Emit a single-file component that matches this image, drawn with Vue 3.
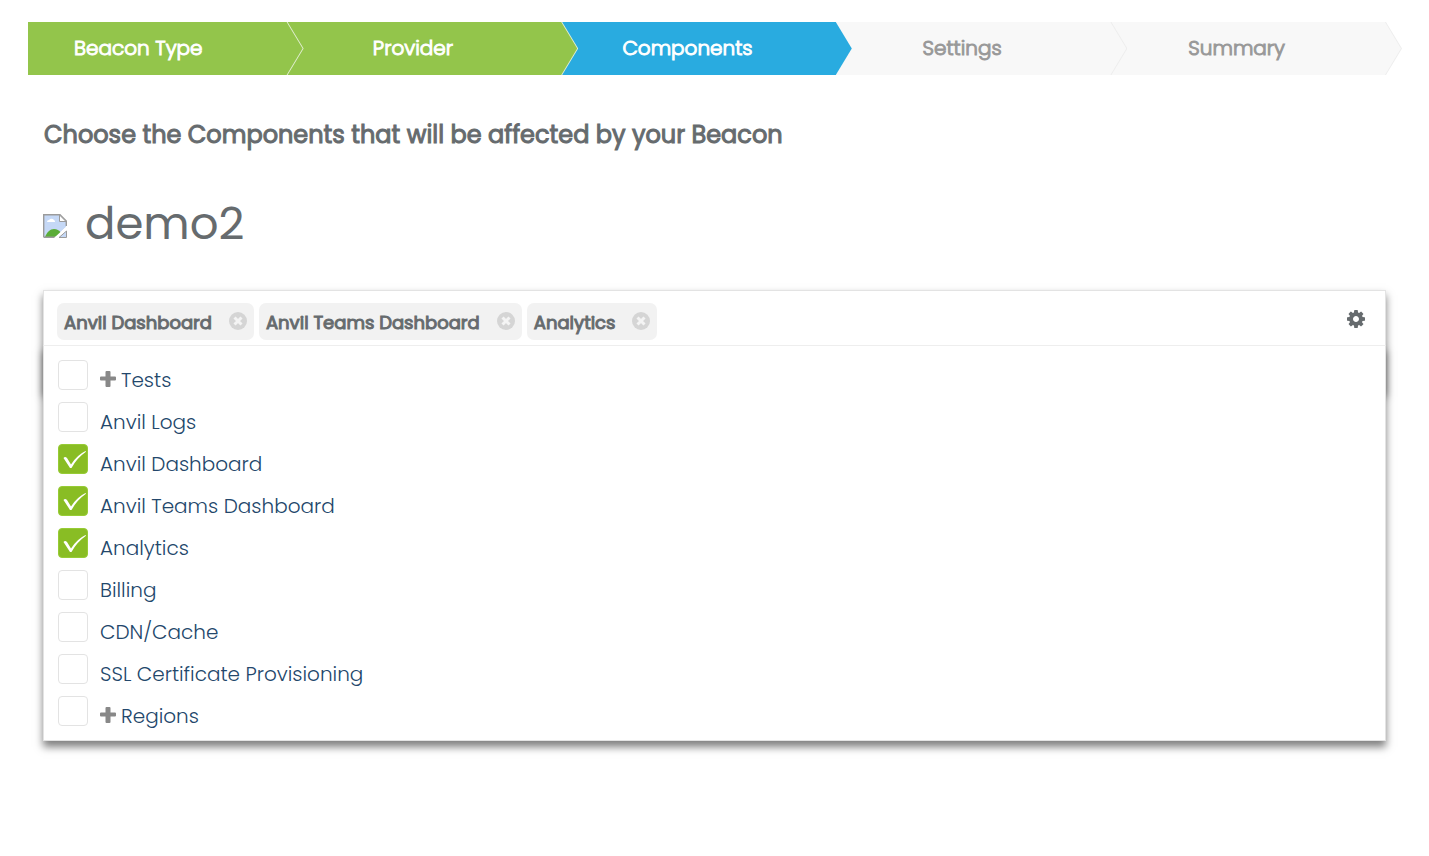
<template>
  <main class="wizard">
    <nav aria-label="Progress">
      <ol class="steps">
        <li
          v-for="(step, i) in steps"
          :key="step.name"
          class="step"
          :class="'step--' + step.state"
          :style="{ zIndex: steps.length - i }"
        >
          <a href="#" class="step-link" @click.prevent>{{ step.name }}</a>
        </li>
      </ol>
    </nav>

    <div class="content">
      <h4 class="heading">Choose the Components that will be affected by your Beacon</h4>

      <h1 class="provider">
        <svg class="provider-logo" viewBox="0 0 24 24" aria-hidden="true">
          <path d="M1 1h16l6 6v6L12 23H1z" fill="#c5d8f6" />
          <path d="M4 8a2 2 0 0 1 2-2 3 3 0 0 1 5 0 2 2 0 0 1 1 2z" fill="#fff" />
          <path d="M2 23c2-5 5-8 9-8 3 0 5 1 7 4l-6 4z" fill="#5bad38" />
          <path d="M.7 23.300V.7H17l6.300 6.300v5M.7 23.300H12" fill="none" stroke="#9b9b9b" stroke-width="1.400" />
          <path d="M16.500 1v6.500H23z" fill="#fff" stroke="#9b9b9b" />
          <path d="M24 12v4l-9 8h-4z" fill="#fff" />
          <path d="M16 23.500h7.500V17z" fill="#c5d8f6" stroke="#9b9b9b" />
        </svg>
        <span>demo2</span>
      </h1>

      <div class="select">
        <div class="select-bar">
          <ul class="chips">
            <li v-for="item in selected" :key="item.name" class="chip">
              <span>{{ item.name }}</span>
              <button
                type="button"
                class="chip-remove"
                :aria-label="'Remove ' + item.name"
                @click="item.checked = false"
              >
                <svg viewBox="0 0 18 18" aria-hidden="true">
                  <circle cx="9" cy="9" r="9" fill="#d5d5d5" />
                  <path d="M5.500 5.500l7 7M12.500 5.500l-7 7" stroke="#f4f4f4" stroke-width="3" />
                </svg>
              </button>
            </li>
          </ul>
          <button type="button" class="gear" aria-label="Options">
            <svg viewBox="0 0 1536 1536" aria-hidden="true">
              <path
                fill="#666b6e"
                d="M1024 768q0-106-75-181t-181-75-181 75-75 181 75 181 181 75 181-75 75-181zm512-109v222q0 12-8 23t-20 13l-185 28q-19 54-39 91 35 50 107 138 10 12 10 25t-9 23q-27 37-99 108t-94 71q-12 0-26-9l-138-108q-44 23-91 38-16 136-29 186-7 28-36 28H657q-14 0-24.500-8.500T621 1506l-28-184q-49-16-90-37l-141 107q-10 9-25 9-14 0-25-11-126-114-165-168-7-10-7-23 0-12 8-23 15-21 51-66.500t54-70.500q-27-50-41-99L29 913q-13-2-21-12.500T0 877V655q0-12 8-23t19-13l186-28q14-46 39-92-40-57-107-138-10-12-10-24 0-10 9-23 26-36 98.500-107.500T337 135q13 0 26 10l138 107q44-23 91-38 16-136 29-186 7-28 36-28h222q14 0 24.500 8.500T915 30l28 184q49 16 90 37l142-107q9-9 24-9 13 0 25 10 129 119 165 170 7 8 7 22 0 12-8 23-15 21-51 66.500t-54 70.500q26 50 41 98l183 28q13 2 21 12.500t8 23.500z"
              />
            </svg>
          </button>
        </div>

        <ul class="menu">
          <li v-for="item in items" :key="item.name">
            <label class="option">
              <span class="box">
                <input v-model="item.checked" type="checkbox" />
                <svg v-if="item.checked" viewBox="0 0 30 30" aria-hidden="true">
                  <path d="M5.500 14q1.500-2 3.500 0l4 6.500Q19 11 27.500 7l.5.800Q19 14 13.500 24h-1.500z" fill="#fff" />
                </svg>
              </span>
              <span class="option-text">
                <svg v-if="item.group" class="plus" viewBox="0 0 16 16" aria-hidden="true">
                  <path
                    d="M6.500 0h3a1 1 0 0 1 1 1v4.500H15a1 1 0 0 1 1 1v2a1 1 0 0 1-1 1h-4.500V15a1 1 0 0 1-1 1h-3a1 1 0 0 1-1-1V9.500H1a1 1 0 0 1-1-1v-2a1 1 0 0 1 1-1h4.500V1a1 1 0 0 1 1-1z"
                    fill="#888"
                  />
                </svg>
                {{ item.name }}
              </span>
            </label>
          </li>
        </ul>
      </div>
    </div>
  </main>
</template>

<script setup>
import { computed, ref } from 'vue'

const steps = [
  { name: 'Beacon Type', state: 'done' },
  { name: 'Provider', state: 'done' },
  { name: 'Components', state: 'active' },
  { name: 'Settings', state: 'todo' },
  { name: 'Summary', state: 'todo' },
]

const items = ref([
  { name: 'Tests', checked: false, group: true },
  { name: 'Anvil Logs', checked: false },
  { name: 'Anvil Dashboard', checked: true },
  { name: 'Anvil Teams Dashboard', checked: true },
  { name: 'Analytics', checked: true },
  { name: 'Billing', checked: false },
  { name: 'CDN/Cache', checked: false },
  { name: 'SSL Certificate Provisioning', checked: false },
  { name: 'Regions', checked: false, group: true },
])

const selected = computed(() => items.value.filter((item) => item.checked))
</script>

<style>
body {
  background: #fff;
}
</style>

<style scoped>
.wizard {
  box-sizing: border-box;
  min-height: 100vh;
  padding: 22px 28px;
  font-family: 'Poppins', 'Inter', sans-serif;
  color: #666b6e;
}

.wizard svg {
  display: block;
}

.steps,
.chips,
.menu {
  list-style: none;
  margin: 0;
  padding: 0;
}

.steps {
  display: flex;
}

.step {
  --fill: #f8f8f8;
  --line: #ededed;
  position: relative;
  flex: 1;
  color: #999;
}

.step--done {
  --fill: #93c54b;
  --line: #e4efd6;
  color: #fff;
}

.step--active {
  --fill: #29abe0;
  --line: #f8f8f8;
  color: #fff;
}

.step::before,
.step::after {
  content: '';
  position: absolute;
  inset: 0 -1px 0 -16px;
  background: var(--line);
  clip-path: polygon(0 0, calc(100% - 16px) 0, 100% 50%, calc(100% - 16px) 100%, 0 100%);
}

.step::after {
  right: 0;
  background: var(--fill);
}

.step:first-child::before,
.step:first-child::after {
  left: 0;
}

.step-link {
  position: relative;
  z-index: 1;
  display: block;
  padding-right: 54px;
  font-size: 20px;
  font-weight: 300;
  line-height: 53px;
  text-align: center;
  text-decoration: none;
  color: inherit;
}

.heading,
.chip {
  font-weight: 400;
}

/* thickened without changing the width of the letters */
.step-link,
.heading,
.chip {
  -webkit-text-stroke: 1px currentColor;
}

.content {
  padding: 0 15px;
}

.heading {
  margin: 42px 0 0 1px;
  font-size: 24px;
  line-height: 36px;
}

.provider {
  display: flex;
  align-items: center;
  gap: 18px;
  margin: 35px 0 30px;
  font-size: 45px;
  font-weight: 400;
  line-height: 72px;
}

.provider-logo {
  width: 24px;
  height: 24px;
  margin-top: 4px;
}

.select {
  position: relative;
  z-index: 0;
}

/* the field itself, taller than its bar and covered by the open menu */
.select::before {
  content: '';
  position: absolute;
  z-index: -1;
  inset: 0 0 auto;
  height: 102px;
  box-shadow: 0 5px 8px rgba(0, 0, 0, 0.5);
}

.select-bar {
  display: flex;
  justify-content: space-between;
  align-items: flex-start;
  padding: 12px 20px 5px 13px;
  border: 1px solid #e3e3e3;
  border-bottom: 0;
  background: #fff;
}

.chips {
  display: flex;
  flex-wrap: wrap;
  gap: 5px;
}

.chip {
  display: flex;
  align-items: center;
  gap: 17px;
  padding: 2px 7px 0;
  border-radius: 7px;
  background: #f2f2f2;
  font-size: 18px;
  line-height: 35px;
}

.chip-remove,
.gear {
  padding: 0;
  border: 0;
  background: none;
  cursor: pointer;
}

.chip-remove {
  width: 18px;
  height: 18px;
  margin-bottom: 3px;
}

.gear {
  width: 18px;
  height: 18px;
  margin-top: 7px;
}

.menu {
  position: relative;
  z-index: -1;
  padding: 14px 14px 2px;
  border: 1px solid #e3e3e3;
  border-top-color: #eee;
  background: #fff;
  box-shadow: 0 6px 8px rgba(0, 0, 0, 0.5);
}

.option {
  display: flex;
  align-items: flex-start;
  gap: 12px;
  height: 42px;
}

.box {
  display: grid;
  width: 30px;
  height: 30px;
}

.box input,
.box svg {
  grid-area: 1 / 1;
  width: 30px;
  height: 30px;
}

.box svg {
  position: relative;
  pointer-events: none;
}

.box input {
  appearance: none;
  box-sizing: border-box;
  margin: 0;
  border: 1px solid #e3e3e3;
  border-radius: 4px;
  background: #fff;
}

.box input:checked {
  border-color: #97cc35;
  background: #89bd24;
}

.option-text {
  display: flex;
  align-items: center;
  gap: 5px;
  font-size: 20px;
  font-weight: 300;
  line-height: 40px;
  color: #23476b;
}

.plus {
  width: 16px;
  height: 16px;
  margin-bottom: 2px;
}
</style>
